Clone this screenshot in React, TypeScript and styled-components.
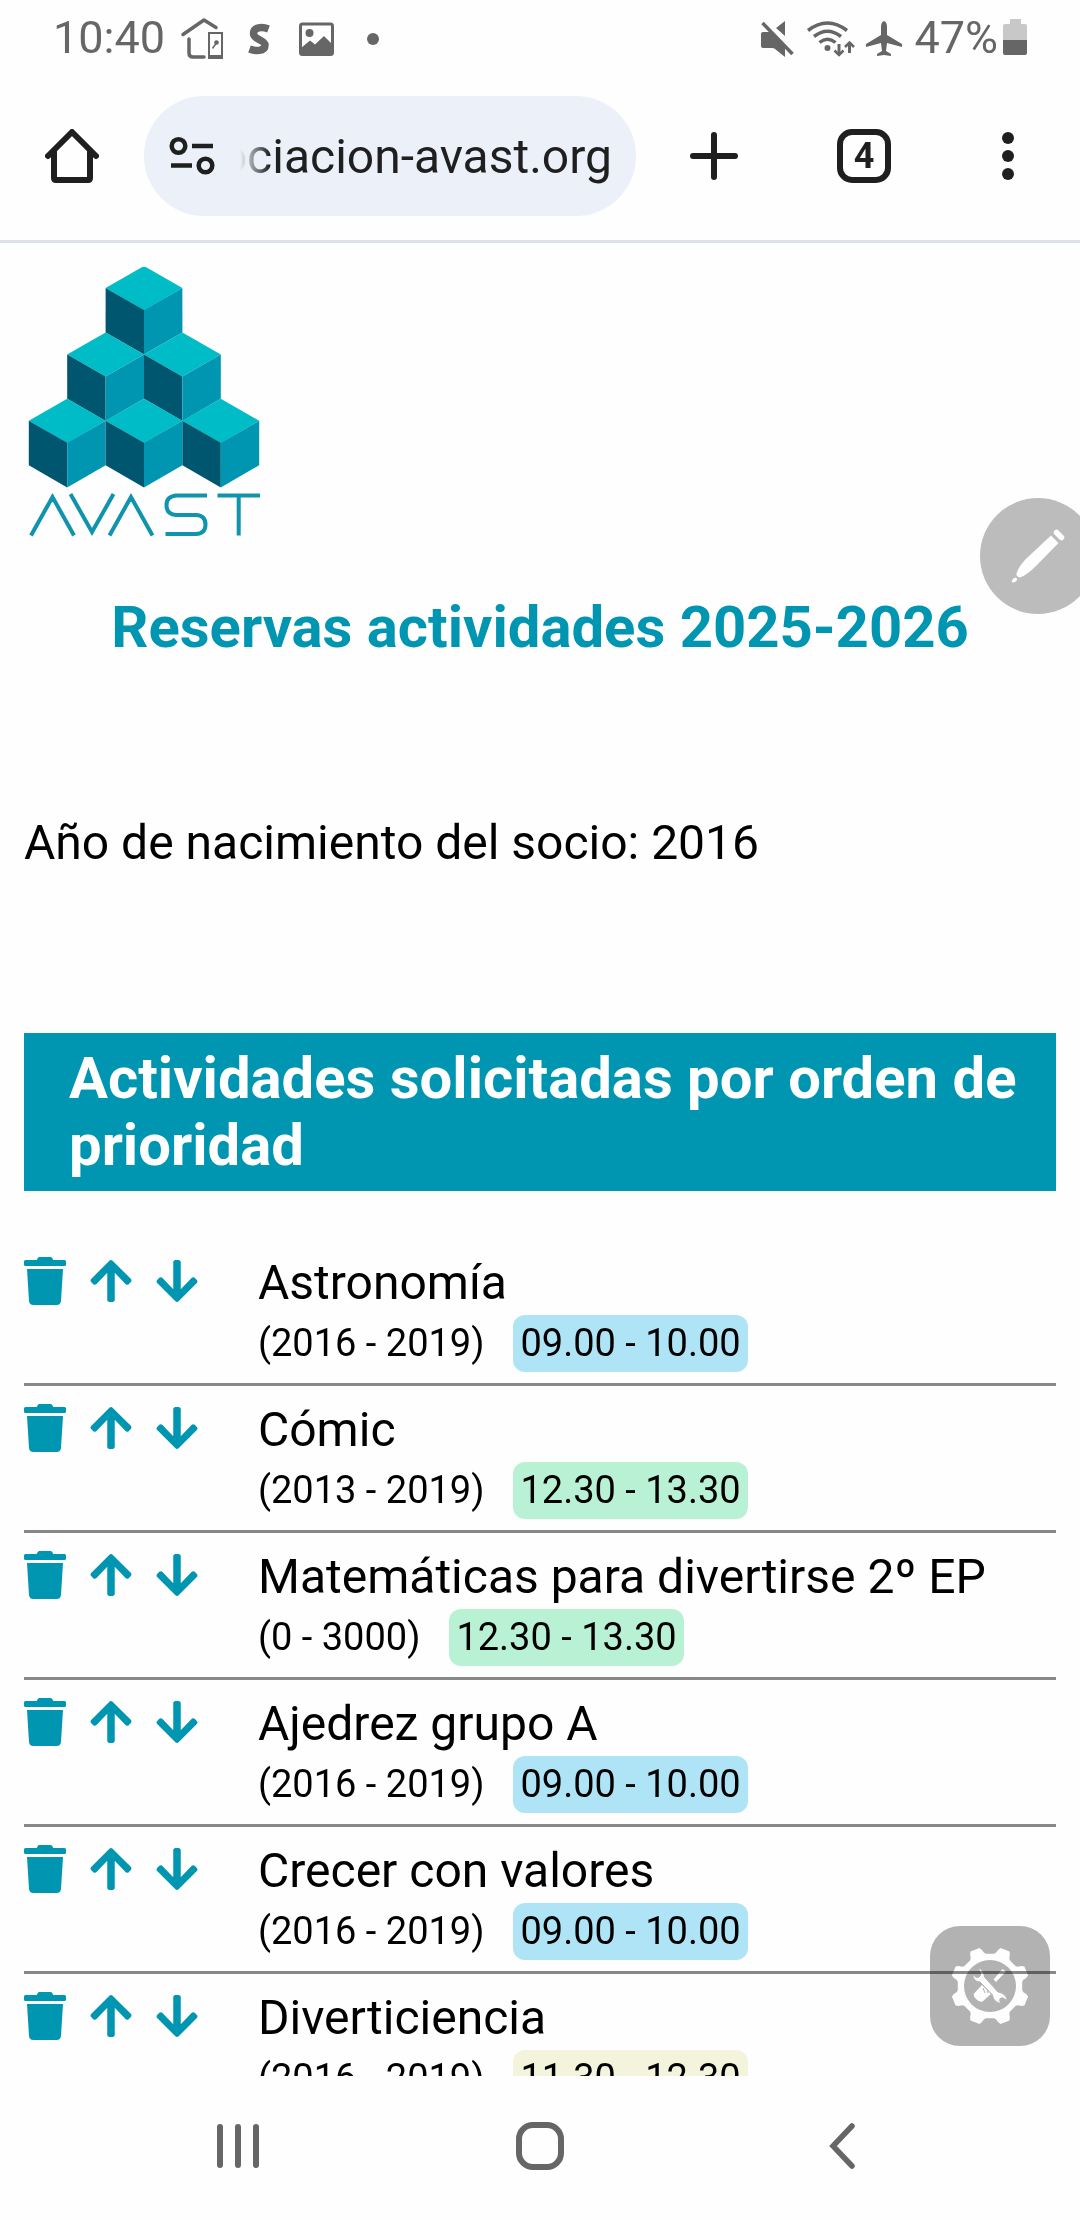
import React from "react";
import styled, { createGlobalStyle } from "styled-components";
import { FaArrowDown, FaArrowUp, FaTrash } from "react-icons/fa";

const GlobalStyle = createGlobalStyle`
  *, *::before, *::after { box-sizing: border-box; }
  body { margin: 0; background: #fefefe; color: #000; font-family: Roboto, "Noto Sans", sans-serif; }
  button { padding: 0; border: 0; background: none; color: inherit; font: inherit; cursor: pointer; }
  svg { display: block; flex: none; }
`;

const Screen = styled.div`
  position: relative;
  display: flex;
  flex-direction: column;
  height: 100vh;
  overflow: hidden;
  background: #fefefe;
`;

const StatusBar = styled.div`
  display: flex;
  align-items: center;
  justify-content: space-between;
  height: 72px;
  padding: 3px 53px 0 53px;
  color: #666;
  font-size: 45px;
  line-height: 54px;
`;

const StatusGroup = styled.div`
  display: flex;
  align-items: center;
`;

const Toolbar = styled.header`
  display: grid;
  grid-template-columns: 144px minmax(0, 1fr) 156px 144px 144px;
  align-items: center;
  height: 171px;
  border-bottom: 3px solid #dde3e8;
  color: #1f1f1f;
`;

const ToolButton = styled.button`
  display: flex;
  align-items: center;
  justify-content: center;
  height: 120px;
`;

const TabCount = styled.span`
  display: flex;
  align-items: center;
  justify-content: center;
  width: 54px;
  height: 54px;
  border: 6px solid currentColor;
  border-radius: 15px;
  font-size: 36px;
  font-weight: 700;
  line-height: 42px;
`;

const AddressPill = styled.div`
  display: flex;
  align-items: center;
  gap: 24px;
  height: 120px;
  padding: 0 24px;
  border-radius: 60px;
  background: #ecf0f9;
`;

const AddressText = styled.div`
  display: flex;
  flex: 1;
  justify-content: flex-end;
  min-width: 0;
  overflow: hidden;
  white-space: nowrap;
  font-size: 48px;
  line-height: 57px;
  mask-image: linear-gradient(to right, transparent, #000 30px);
`;

const Page = styled.main`
  flex: 1;
  min-height: 0;
  padding: 24px 24px 0;
  overflow-y: auto;
  scrollbar-width: none;
`;

const Title = styled.h1`
  margin: 55px 0 0;
  color: #0096b2;
  font-size: 58px;
  font-weight: 700;
  line-height: 67px;
  text-align: center;
`;

const BirthYear = styled.p`
  margin: 153px 0 0;
  font-size: 48px;
  line-height: 57px;
`;

const Banner = styled.h2`
  margin: 162px 0 48px;
  padding: 12px 30px 12px 45px;
  background: #0096b2;
  color: #fff;
  font-size: 58px;
  font-weight: 700;
  line-height: 67px;
`;

const ActivityList = styled.ul`
  margin: 0;
  padding: 0;
  list-style: none;
`;

const Activity = styled.li`
  display: grid;
  grid-template-columns: 234px minmax(0, 1fr);
  padding: 15px 0 11px;
  border-bottom: 3px solid #888;
`;

const Actions = styled.div`
  display: flex;
  align-items: center;
  gap: 24px;
  height: 54px;
  color: #0096b2;
`;

const ActionButton = styled.button`
  width: 42px;
  height: 48px;

  svg {
    width: 42px;
    height: 48px;
  }
`;

const ActivityName = styled.div`
  font-size: 48px;
  line-height: 57px;
`;

const Details = styled.div`
  display: flex;
  align-items: center;
  gap: 29px;
  margin-top: 4px;
  font-size: 38px;
  line-height: 45px;
`;

const TimeBadge = styled.span<{ $color: string }>`
  padding: 6px 7px;
  border-radius: 12px;
  background: ${(p) => p.$color};
`;

const NavBar = styled.nav`
  display: grid;
  grid-template-columns: repeat(3, 302px);
  justify-content: center;
  height: 144px;
  padding-bottom: 4px;
  color: #666;
`;

const NavButton = styled.button`
  display: flex;
  align-items: center;
  justify-content: center;
`;

const EditBubble = styled.button`
  position: absolute;
  top: 498px;
  right: -16px;
  width: 116px;
  height: 116px;
  border-radius: 50%;
  background: #bcbcbc;
`;

const ToolsBubble = styled.button`
  position: absolute;
  right: 30px;
  bottom: 174px;
  width: 120px;
  height: 120px;
  border-radius: 30px;
  background: #b3b3b3;
  mix-blend-mode: multiply;
`;

const BLUE = "#aee4f6";
const GREEN = "#b9f1d5";
const BEIGE = "#f4f4dc";

const activities = [
  { name: "Astronomía", years: "(2016 - 2019)", time: "09.00 - 10.00", color: BLUE },
  { name: "Cómic", years: "(2013 - 2019)", time: "12.30 - 13.30", color: GREEN },
  { name: "Matemáticas para divertirse 2º EP", years: "(0 - 3000)", time: "12.30 - 13.30", color: GREEN },
  { name: "Ajedrez grupo A", years: "(2016 - 2019)", time: "09.00 - 10.00", color: BLUE },
  { name: "Crecer con valores", years: "(2016 - 2019)", time: "09.00 - 10.00", color: BLUE },
  { name: "Diverticiencia", years: "(2016 - 2019)", time: "11.30 - 12.30", color: BEIGE },
];

const cubes = [
  [115, 0],
  [76.6, 66.4],
  [153.4, 66.4],
  [38.2, 132.8],
  [115, 132.8],
  [191.8, 132.8],
];

function Logo() {
  return (
    <svg width="240" height="272" viewBox="-5 1 240 272" role="img" aria-label="AVAST">
      {cubes.map(([x, y]) => (
        <g key={`${x}-${y}`} transform={`translate(${x} ${y})`}>
          <path fill="#00bcc6" d="M0 0L38.400 22L0 44.200L-38.400 22Z" />
          <path fill="#00566f" d="M-38.400 22L0 44V88.600L-38.400 66.400Z" />
          <path fill="#0096b2" d="M38.400 22L0 44V88.600L38.400 66.400Z" />
        </g>
      ))}
      <path
        fill="none"
        stroke="#1093ad"
        strokeWidth="4"
        d="M2 269.500L23.500 231L45 269.500M41.500 228L63 266L84.500 228M80.500 269.500L102 231L123.500 269.500M178 229.500H147Q137.500 230.500 137.500 239Q137.500 248.500 147 249H167Q176.500 249.500 176.500 258.500Q176.500 267.500 167 268H136.500M188.500 229.500H231M209.700 229.500V269.500"
      />
    </svg>
  );
}

// Outline of an eight-toothed gear centred on (60, 60).
function gearPath() {
  const point = (radius: number, degrees: number) => {
    const a = (degrees * Math.PI) / 180;
    return `${(60 + radius * Math.cos(a)).toFixed(1)} ${(60 + radius * Math.sin(a)).toFixed(1)}`;
  };
  const teeth = Array.from({ length: 8 }, (_, i) => {
    const c = 22.5 + i * 45;
    return [
      point(32.5, c - 15),
      point(34, c - 12),
      point(37, c - 10),
      point(39.5, c - 7),
      point(39.5, c + 7),
      point(37, c + 10),
      point(34, c + 12),
      point(32.5, c + 15),
    ].join("L");
  });
  return `M${teeth.join("L")}Z`;
}

export default function App() {
  return (
    <>
      <GlobalStyle />
      <Screen>
        <StatusBar>
          <StatusGroup>
            <span>10:40</span>
            <svg width="224" height="48" viewBox="164 12 224 48" fill="none" stroke="#666">
              <path strokeWidth="3.500" strokeLinecap="round" strokeLinejoin="round" d="M182 32.500L203 18L215 25.500M188 37V51Q188 55 192 55H203" />
              <rect x="208" y="31" width="13" height="25" strokeWidth="2" />
              <path fill="#666" stroke="none" d="M207 53h15v4h-15z" />
              <path strokeWidth="1.500" d="M211.500 46.500L215 41.500" />
              <circle cx="215.500" cy="40.500" r="2.300" fill="#666" stroke="none" />
              <path strokeWidth="7.500" d="M267.500 27C261 24.500 252.500 25 252.500 31.500C252.500 38 264 37.500 264 43C264 50 254 49 248.500 47" />
              <rect x="299.500" y="22" width="32" height="30.500" rx="2" strokeWidth="3" />
              <circle cx="308.500" cy="31" r="4" fill="#666" stroke="none" />
              <path fill="#666" stroke="none" d="M300 46L309 38.500L314 42.500L323 34L332 43V53H300Z" />
              <circle cx="372" cy="37" r="6" fill="#666" stroke="none" />
            </svg>
          </StatusGroup>
          <StatusGroup>
            <svg width="156" height="48" viewBox="756 12 156 48" fill="#666">
              <path d="M759 32q0-2 2-2h8l14 14v11l-10-8q-1-1-3-1h-9q-2 0-2-2zM783 19v15l-9-8z" />
              <path stroke="#fefefe" strokeWidth="3" d="M763 19.500L793 50.500" />
              <path stroke="#666" strokeWidth="3.500" d="M760.500 21L790.500 52" />
              <g fill="none" stroke="#666" strokeWidth="3.500">
                <path d="M806 28.500Q825.500 13.500 845 28.500M812 34.500Q825.500 24 839 34.500M817.500 40.500Q825.500 34 833.500 40.500" />
                <path strokeWidth="3" d="M837 42V52M847.500 51V42" />
                <path strokeWidth="2.500" d="M832.500 48.500L837 53L841.500 48.500M843 45L847.500 40.500L852 45" />
              </g>
              <circle cx="825.500" cy="46" r="3" />
              <path d="M882 19q3 1 3 6v8l15 9v3l-15-4-1 8 5 3v2l-7-1-7 1v-2l5-3-1-8-15 4v-3l15-9v-8q0-5 3-6z" />
            </svg>
            <span>47%</span>
            <svg width="29" height="39" viewBox="-5 0 29 39">
              <path fill="#c8c8c8" d="M7 1h11v5h4q2 0 2 2v15H0V8q0-2 2-2h5z" />
              <path fill="#666" d="M0 22h24v13q0 2-2 2H2q-2 0-2-2z" />
            </svg>
          </StatusGroup>
        </StatusBar>

        <Toolbar>
          <ToolButton aria-label="Inicio">
            <svg width="54" height="54" viewBox="0 0 54 54" fill="none" stroke="currentColor" strokeWidth="6" strokeLinecap="round" strokeLinejoin="round">
              <path d="M3 27L27 3L51 27M9 22V49Q9 51 11 51H43Q45 51 45 49V22" />
            </svg>
          </ToolButton>
          <AddressPill>
            <svg width="48" height="48" viewBox="0 0 48 48" fill="none" stroke="currentColor" strokeWidth="4.500">
              <circle cx="10.500" cy="14" r="6.800" />
              <circle cx="37.500" cy="33.500" r="6.800" />
              <path d="M24 14H45M3 33.500H24" />
            </svg>
            <AddressText>asociacion-avast.org</AddressText>
          </AddressPill>
          <ToolButton aria-label="Nueva pestaña">
            <svg width="48" height="48" viewBox="0 0 48 48" fill="none" stroke="currentColor" strokeWidth="6" strokeLinecap="round">
              <path d="M24 3V45M3 24H45" />
            </svg>
          </ToolButton>
          <ToolButton aria-label="Pestañas abiertas">
            <TabCount>4</TabCount>
          </ToolButton>
          <ToolButton aria-label="Más opciones">
            <svg width="12" height="48" viewBox="0 0 12 48" fill="currentColor">
              <circle cx="6" cy="6" r="6" />
              <circle cx="6" cy="24" r="6" />
              <circle cx="6" cy="42" r="6" />
            </svg>
          </ToolButton>
        </Toolbar>

        <Page>
          <Logo />
          <Title>Reservas actividades 2025-2026</Title>
          <BirthYear>Año de nacimiento del socio: 2016</BirthYear>
          <Banner>Actividades solicitadas por orden de prioridad</Banner>
          <ActivityList>
            {activities.map((a) => (
              <Activity key={a.name}>
                <Actions>
                  <ActionButton aria-label={`Eliminar ${a.name}`}>
                    <FaTrash />
                  </ActionButton>
                  <ActionButton aria-label={`Subir ${a.name}`}>
                    <FaArrowUp />
                  </ActionButton>
                  <ActionButton aria-label={`Bajar ${a.name}`}>
                    <FaArrowDown />
                  </ActionButton>
                </Actions>
                <div>
                  <ActivityName>{a.name}</ActivityName>
                  <Details>
                    <span>{a.years}</span>
                    <TimeBadge $color={a.color}>{a.time}</TimeBadge>
                  </Details>
                </div>
              </Activity>
            ))}
          </ActivityList>
        </Page>

        <NavBar>
          <NavButton aria-label="Recientes">
            <svg width="42" height="48" viewBox="0 0 42 48" fill="none" stroke="currentColor" strokeWidth="6" strokeLinecap="round">
              <path d="M3 5V43M21 5V43M39 5V43" />
            </svg>
          </NavButton>
          <NavButton aria-label="Pantalla principal">
            <svg width="48" height="48" viewBox="0 0 48 48" fill="none" stroke="currentColor" strokeWidth="6">
              <rect x="3" y="3" width="42" height="42" rx="14" />
            </svg>
          </NavButton>
          <NavButton aria-label="Atrás">
            <svg width="26" height="48" viewBox="0 0 26 48" fill="none" stroke="currentColor" strokeWidth="5.500" strokeLinecap="round">
              <path d="M23 4L4 24L23 44" />
            </svg>
          </NavButton>
        </NavBar>

        <EditBubble aria-label="Editar">
          <svg width="116" height="116" viewBox="0 0 116 116" fill="#fff">
            <path d="M71 37.500L78.500 45L56 68Q47 77 40 79.500Q36 78.500 36.500 75.500Q39 67 49 58Z" />
            <path stroke="#fff" strokeWidth="5.500" strokeLinecap="round" d="M76.500 34.500L81.500 39.500" />
            <path d="M35 79.500Q37.500 80 37 82Q35 85 32 84.500Q31 82 35 79.500Z" />
          </svg>
        </EditBubble>
        <ToolsBubble aria-label="Herramientas">
          <svg width="120" height="120" viewBox="0 0 120 120" fill="#fff">
            <path fillRule="evenodd" d={`${gearPath()}M34 60a26 26 0 1 0 52 0a26 26 0 1 0-52 0Z`} />
            <path d="M63.500 53.500L72.500 43L76 45.500L66 56Z" />
            <path d="M52 59L61 68L52.500 75.500Q49.500 76.500 46 73Q43 70 44 67.500Z" />
            <path stroke="#b3b3b3" strokeWidth="1" d="M53 62L55 67M57 62.500L58 67" />
            <path
              stroke="#b3b3b3"
              strokeWidth="1"
              d="M48 42Q54 44 54.500 51L68 66Q75 67 77 73Q76.500 74.500 76 74Q73 70.500 70 72.500Q69 75 71 77.500Q63 76 62.500 69L50 56Q44 56 42.500 49Q44 48.500 45.500 51Q49 52.500 50.500 49.500Q51 46 48 42Z"
            />
          </svg>
        </ToolsBubble>
      </Screen>
    </>
  );
}
